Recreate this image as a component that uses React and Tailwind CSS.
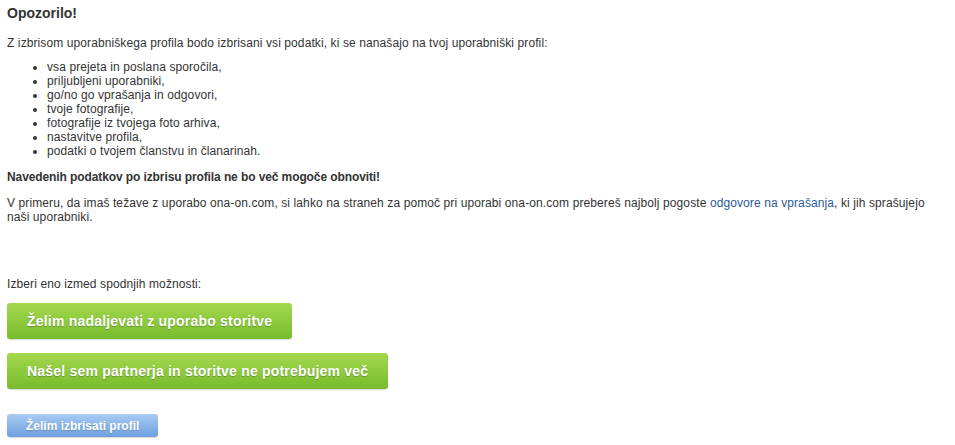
export default function App() {
  const items = [
    "vsa prejeta in poslana sporočila,",
    "priljubljeni uporabniki,",
    "go/no go vprašanja in odgovori,",
    "tvoje fotografije,",
    "fotografije iz tvojega foto arhiva,",
    "nastavitve profila,",
    "podatki o tvojem članstvu in članarinah.",
  ];

  return (
    <div className="min-h-[445px] bg-white px-[7px] pt-[5px] text-[12px] leading-[14px] tracking-[0.1px] text-[#333] font-['Liberation_Sans',Arial,sans-serif]">
      <h3 className="text-[14px] font-bold leading-[17px] tracking-normal text-[#333]">Opozorilo!</h3>

      <p className="mt-[14px]">
        Z izbrisom uporabniškega profila bodo izbrisani vsi podatki, ki se nanašajo na tvoj uporabniški profil:
      </p>

      <ul className="mt-[10px] list-disc pl-[40px]">
        {items.map((item) => (
          <li key={item}>{item}</li>
        ))}
      </ul>

      <p className="mt-[12px] font-bold tracking-[-0.1px]">Navedenih podatkov po izbrisu profila ne bo več mogoče obnoviti!</p>

      <p className="mt-[12px] max-w-[925px]">
        V primeru, da imaš težave z uporabo ona-on.com, si lahko na straneh za pomoč pri uporabi ona-on.com prebereš
        najbolj pogoste{" "}
        <a href="#" className="text-[#2b5c95]">
          odgovore na vprašanja
        </a>
        , ki jih sprašujejo naši uporabniki.
      </p>

      <p className="mt-[53px]">Izberi eno izmed spodnjih možnosti:</p>

      <div className="mt-[12px] flex flex-col items-start">
        <button className="h-[36px] rounded-[3px] bg-gradient-to-b from-[#a4d84e] to-[#78bc2c] px-[20px] text-[14px] font-bold tracking-[0.2px] text-white [text-shadow:0_1px_1px_rgba(0,0,0,0.25)] shadow-[0_1px_1px_rgba(0,0,0,0.15)]">
          Želim nadaljevati z uporabo storitve
        </button>
        <button className="mt-[14px] h-[36px] rounded-[3px] bg-gradient-to-b from-[#a4d84e] to-[#78bc2c] px-[20px] text-[14px] font-bold tracking-[0.2px] text-white [text-shadow:0_1px_1px_rgba(0,0,0,0.25)] shadow-[0_1px_1px_rgba(0,0,0,0.15)]">
          Našel sem partnerja in storitve ne potrebujem več
        </button>
        <button className="mt-[25px] h-[23px] rounded-[3px] bg-gradient-to-b from-[#a9cbf2] to-[#6d9fe0] px-[19px] text-[12px] font-bold tracking-normal text-white [text-shadow:0_1px_1px_rgba(0,0,0,0.2)] shadow-[0_1px_1px_rgba(0,0,0,0.15)]">
          Želim izbrisati profil
        </button>
      </div>
    </div>
  );
}
